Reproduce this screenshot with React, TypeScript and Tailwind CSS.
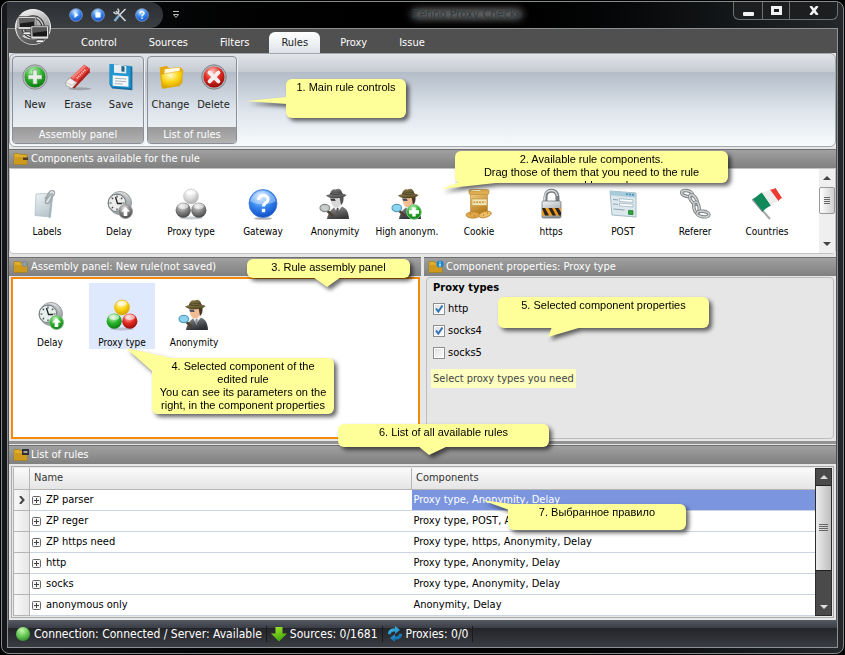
import { useState } from "react";
import type { ReactNode } from "react";
import clsx from "clsx";

const tabs = ["Control", "Sources", "Filters", "Rules", "Proxy", "Issue"];

const initialRules = [
  { name: "ZP parser", components: "Proxy type, Anonymity, Delay" },
  { name: "ZP reger", components: "Proxy type, POST, Anonymity, Delay" },
  { name: "ZP https need", components: "Proxy type, https, Anonymity, Delay" },
  { name: "http", components: "Proxy type, Anonymity, Delay" },
  { name: "socks", components: "Proxy type, Anonymity, Delay" },
  { name: "anonymous only", components: "Anonymity, Delay" },
];

/* Gradients shared by all the icons */
function IconDefs() {
  const linear: [string, string, string][] = [
    ["steel", "#f4f6f7", "#8f9699"],
    ["coat", "#8d9296", "#2d3135"],
    ["coatGray", "#9a9a9a", "#3c3c3c"],
    ["hat", "#9b8c5a", "#4e431f"],
    ["hatGray", "#8e8e8e", "#454545"],
    ["cookie", "#f0cf80", "#b67a1c"],
    ["paper", "#eef4f6", "#b9c8ce"],
    ["arrow", "#a4ea2c", "#45a80a"],
    ["sync", "#4cc3f0", "#0c6fae"],
    ["orb", "#ffffff", "#7a7a7a"],
  ];
  const radial: [string, string, string, string][] = [
    ["green", "#d2f5cf", "#2bb52b", "#08700f"],
    ["red", "#ffc4bb", "#e22a22", "#8c0805"],
    ["yellow", "#fffbd0", "#fbd412", "#cf9800"],
    ["blue", "#cfe8ff", "#3688f0", "#0d46c0"],
    ["silver", "#ffffff", "#dcdcdc", "#a5a5a5"],
    ["dark", "#e4e4e4", "#858585", "#3c3c3c"],
    ["lamp", "#c8f5b0", "#6ccb58", "#2c8a2c"],
  ];
  return (
    <svg className="absolute h-0 w-0" aria-hidden="true">
      <defs>
        {linear.map(([id, a, b]) => (
          <linearGradient key={id} id={id} x1="0" y1="0" x2="0.4" y2="1">
            <stop offset="0" stopColor={a} />
            <stop offset="1" stopColor={b} />
          </linearGradient>
        ))}
        {radial.map(([id, a, b, c]) => (
          <radialGradient key={id} id={id} cx="0.42" cy="0.25" r="0.8">
            <stop offset="0" stopColor={a} />
            <stop offset="0.5" stopColor={b} />
            <stop offset="1" stopColor={c} />
          </radialGradient>
        ))}
      </defs>
    </svg>
  );
}

function Svg({ size = "md", children }: { size?: "sm" | "md"; children: ReactNode }) {
  return (
    <svg viewBox="0 0 32 32" aria-hidden="true" className={clsx("block shrink-0", size === "sm" ? "h-7 w-7" : "h-8 w-8")}>
      {children}
    </svg>
  );
}

/* Ribbon icons */
const NewIcon = () => (
  <Svg size="sm">
    <circle cx="16" cy="16" r="14" fill="#b4b8bb" stroke="#85898c" />
    <circle cx="16" cy="16" r="12" fill="url(#green)" />
    <path d="M13.500 8h5v5.500h5.500v5h-5.500v5.500h-5v-5.500H8v-5h5.500z" fill="#e9eee9" stroke="#3c8d3c" strokeWidth=".6" />
  </Svg>
);

const EraseIcon = () => (
  <Svg size="sm">
    <ellipse cx="18" cy="29.500" rx="13" ry="1.700" fill="#8b8f96" opacity=".7" />
    <path d="M23 2l6.500 4.500v4L12 29l-6-2-4-4z" fill="#b0201d" />
    <path d="M23 2l6.500 4.500L11.500 25 4 20z" fill="#e2403a" />
    <path d="M7 17l7.500 5.500L9 29 2 25.500v-4z" fill="#f3f0ee" stroke="#979393" strokeWidth=".8" />
    <path d="M2 22l7 3.500 6-4" fill="none" stroke="#bdb9b7" />
    <path d="M14.500 17.500L25 7" stroke="#f6c9c4" strokeWidth="2" strokeDasharray="1.500 1" />
    <path d="M23 2l2.500 1.700L10.500 18.200 8 16z" fill="#f59a8f" opacity=".7" />
  </Svg>
);

const SaveIcon = () => (
  <Svg size="sm">
    <path d="M3 1l26 3v27L6 29l-3-4z" fill="#176fa6" />
    <path d="M3 1l24 2.500v25L6 27l-3-3z" fill="#2196cf" />
    <path d="M8 1.500l14 1.500v9l-14-1z" fill="#e7edf1" />
    <path d="M16.500 3.500l3.500.4v6l-3.500-.3z" fill="#24627e" />
    <path d="M6.500 14l18 1.200v12L6.500 26z" fill="#f5f7f8" />
    <path d="M9 17.500l13 .8M9 20.500l13 .8M9 23.500l9 .6" stroke="#9aa8b0" />
  </Svg>
);

const ChangeIcon = () => (
  <Svg size="sm">
    <path d="M3 5l8-2 3 3 12-1.500 3 2v17L7 29l-2-2z" fill="#e3a90c" />
    <path d="M9 7l17-2v6L8 14z" fill="#fffbe0" />
    <path d="M4.500 13L30 8.500 26 26 6.500 29z" fill="url(#yellow)" stroke="#dda50b" strokeWidth=".6" />
  </Svg>
);

const DeleteIcon = () => (
  <Svg size="sm">
    <circle cx="16" cy="16" r="14" fill="#adb0b3" stroke="#7f8286" />
    <circle cx="16" cy="16" r="12" fill="url(#red)" />
    <path d="M11 11l10 10M21 11L11 21" stroke="#f4eeee" strokeWidth="4.600" strokeLinecap="round" />
  </Svg>
);

/* Component icons */
const LabelsIcon = () => (
  <Svg>
    <path d="M5 6l17-1-2.500 24L4 27.500z" fill="url(#paper)" stroke="#b3c0c6" strokeWidth=".8" />
    <path d="M20 5l2-.2L19.500 30l-2-.4z" fill="#a7b6bd" />
    <path d="M14 11l4.500-7c1.500-2.400 6-1.500 4.800 2L18 14.500c-1.500 2.200-4.800.8-3.300-2L19.500 6" fill="none" stroke="#9fa5a8" strokeWidth="1.400" />
  </Svg>
);

function DelayIcon({ gray = false }: { gray?: boolean }) {
  return (
    <Svg>
      <circle cx="17" cy="15" r="11.500" fill="url(#steel)" stroke="#9a9e9f" />
      <circle cx="14.500" cy="15" r="10" fill="#a9afb1" />
      <circle cx="14" cy="15" r="8.800" fill={gray ? "#ececec" : "#e5f0ed"} stroke="#767c7e" />
      <path d="M14 7.500v2M14 20.500v2M6.500 15h2M19.500 15h2M8.700 9.700l1.400 1.400M8.700 20.300l1.400-1.400M19.300 9.700l-1.400 1.400" stroke="#444" strokeWidth="1.200" />
      <path d="M14.500 15.500l-2-6.500M14 15.500h5" stroke="#222" strokeWidth="1.300" />
      <circle cx="22.500" cy="23.500" r="7" fill={gray ? "url(#dark)" : "url(#green)"} stroke={gray ? "#a2a2a2" : "#8bbf90"} />
      <path d="M22.500 19l4.500 4.500h-2.700V28h-3.600v-4.500H18z" fill="#fff" />
    </Svg>
  );
}

function ProxyTypeIcon({ gray = false }: { gray?: boolean }) {
  return (
    <Svg>
      <ellipse cx="16" cy="30" rx="12" ry="1.500" fill="#9298a5" opacity=".5" />
      <circle cx="16" cy="8.500" r="7.500" fill={gray ? "url(#silver)" : "url(#yellow)"} stroke={gray ? "#c4c4c4" : "#dcae14"} strokeWidth=".6" />
      <circle cx="8.200" cy="22.200" r="7.600" fill={gray ? "url(#dark)" : "url(#green)"} />
      <circle cx="23.800" cy="22.200" r="7.600" fill={gray ? "url(#dark)" : "url(#red)"} />
      <ellipse cx="8.200" cy="18.200" rx="5" ry="2.700" fill="#fff" opacity=".55" />
      <ellipse cx="23.800" cy="18.200" rx="5" ry="2.700" fill="#fff" opacity=".55" />
      <ellipse cx="16" cy="4.500" rx="4.800" ry="2.500" fill="#fff" opacity=".6" />
    </Svg>
  );
}

const GatewayIcon = () => (
  <Svg>
    <ellipse cx="16" cy="30.500" rx="9" ry="1.300" fill="#777" opacity=".55" />
    <circle cx="16" cy="15.500" r="14" fill="url(#blue)" stroke="#3f78dc" strokeWidth=".8" />
    <path d="M3 13a13.200 12 0 0 1 26 0c-7 4.500-19 4.500-26 0z" fill="#fff" opacity=".35" />
    <path d="M11.500 12c0-6 9.500-6 9.500-.8 0 3.700-4.500 3.600-4.500 7.300" fill="none" stroke="#fff" strokeWidth="3.200" />
    <rect x="14.800" y="20.800" width="3.400" height="3.400" fill="#fff" />
  </Svg>
);

function SpyIcon({ gray = false, plus = false }: { gray?: boolean; plus?: boolean }) {
  return (
    <Svg>
      <path d="M8 31c1-6 4-10 8-12l5-1c6 1.500 8.500 5 9 13z" fill={gray ? "url(#coatGray)" : "url(#coat)"} />
      <path d="M14.500 18.500l3.500 6 6-7-3-1.500z" fill="#f0f0f0" />
      <path d="M18 19.500l1.800 1-.8 6-2-3z" fill={gray ? "#555" : "#8f8f94"} />
      <path d="M11.500 9c0 6 2 10.500 5.500 10.500s6-3.500 6.500-11.500z" fill={gray ? "#d8d8d8" : "#f2bd93"} />
      <path d="M20.500 9h4c.4 4-.8 6.500-2.500 8z" fill={gray ? "#505050" : "#46372a"} />
      <path d="M11.200 10.500l4.500.3 1 2.200-4.700-.3z" fill={gray ? "#3a3a3a" : "#3f4c66"} />
      <path d="M11 6C12 1.500 14.500.5 16.500 1.600c3-1.800 6-.6 7 4.200z" fill={gray ? "url(#hatGray)" : "url(#hat)"} />
      <path d="M7 7.500c3-2.500 17-3.500 20.500-.5-3 4-17 4.700-20.500.5z" fill={gray ? "url(#hatGray)" : "url(#hat)"} />
      <path d="M11 5.600c4 1 8 1 12.500.1" fill="none" stroke={gray ? "#444" : "#54472a"} strokeWidth="1.200" />
      <path d="M8.500 23l5 4.500" stroke="#4d4030" strokeWidth="2.600" strokeLinecap="round" />
      <ellipse cx="5.800" cy="20" rx="4.800" ry="3.600" fill={gray ? "#c8cccc" : "#8bd5f3"} stroke={gray ? "#888" : "#5b9cba"} strokeWidth="1.200" />
      {plus && (
        <>
          <circle cx="23" cy="24" r="7.300" fill="url(#green)" stroke="#88c88c" />
          <path d="M21.300 19.500h3.400v2.800H28v3.400h-3.300v2.800h-3.400v-2.800H18v-3.400h3.300z" fill="#fff" />
        </>
      )}
    </Svg>
  );
}

const CookieIcon = () => (
  <Svg>
    <path d="M7.500 5h17v20c0 2.500-16 2.500-17 0z" fill="url(#cookie)" stroke="#b98a3a" strokeWidth=".6" />
    <rect x="6" y="1.500" width="20" height="5" rx="1.500" fill="#dfb053" stroke="#b98a3a" strokeWidth=".6" />
    <path d="M8.500 2.500h9" stroke="#fff3ca" />
    <rect x="9" y="11" width="15" height="6.500" fill="#f5e7b4" stroke="#c39a4e" strokeWidth=".7" />
    <path d="M10.500 14.300h12" stroke="#c59a4e" strokeWidth="2" strokeDasharray="1.800 1" />
    <ellipse cx="10" cy="27" rx="7" ry="3.200" fill="#dfa748" stroke="#b07b2b" strokeWidth=".7" />
    <ellipse cx="22" cy="26.500" rx="6.500" ry="3" fill="#edbc63" stroke="#b07b2b" strokeWidth=".7" transform="rotate(-15 22 26.500)" />
    <path d="M7 26h1M11 28h1M20 27h1M24 25h1" stroke="#9a6820" />
  </Svg>
);

const LockIcon = () => (
  <Svg>
    <path d="M10.500 15V9c0-8.500 12-8.500 12 0v6" fill="none" stroke="#777c7f" strokeWidth="4" />
    <path d="M9.800 15V9c0-8.500 12-8.500 12.500-1" fill="none" stroke="#dfe3e5" strokeWidth="1.400" />
    <rect x="7" y="13" width="19" height="17" rx="1.500" fill="url(#steel)" stroke="#65696b" strokeWidth=".7" />
    <rect x="7" y="20" width="19" height="7.500" fill="#ef9b1b" />
    <path d="M7 20h3l4 7.500h-4zM13.500 20h3.500l4 7.500h-3.500zM20 20h3.500l2.500 4.500v3h-2z" fill="#2a2522" />
  </Svg>
);

const PostIcon = () => (
  <Svg>
    <path d="M3 3l26 2v24L5 27z" fill="#dbe8ee" stroke="#a5bac4" />
    <path d="M3 3l26 2v4.500L3.300 7.300z" fill="#a8cbdc" />
    <path d="M19 6.100l8 .7" stroke="#4c93b8" strokeWidth="1.800" strokeDasharray="2 1" />
    <path d="M6 11.500l5 .4M6 16l5 .4M6.500 21l11 1" stroke="#8fa3ad" />
    <path d="M12.500 10.700l13.500 1.100v2.700l-13.500-1.100zM12.500 15.200l13.500 1.100V19l-13.500-1.100z" fill="#fff" stroke="#93a9b4" strokeWidth=".7" />
    <path d="M21.500 22.300l4.500.4v4l-4.500-.4z" fill="#2ca63b" stroke="#18732a" strokeWidth=".7" />
  </Svg>
);

const chainLinks = [
  { cx: 8, cy: 5.5, rx: 5.5, ry: 2.8, angle: 12 },
  { cx: 14.5, cy: 11.5, rx: 2.6, ry: 5.5, angle: -35 },
  { cx: 17.5, cy: 19.5, rx: 2.6, ry: 5.5, angle: -10 },
  { cx: 24, cy: 26, rx: 6, ry: 2.8, angle: 8 },
];

const RefererIcon = () => (
  <Svg>
    {chainLinks.map((l) => (
      <g key={l.cx} fill="none" transform={`rotate(${l.angle} ${l.cx} ${l.cy})`}>
        <ellipse cx={l.cx} cy={l.cy} rx={l.rx} ry={l.ry} stroke="#7c8183" strokeWidth="3.400" />
        <ellipse cx={l.cx} cy={l.cy} rx={l.rx} ry={l.ry} stroke="#cdd1d1" strokeWidth="1.600" />
      </g>
    ))}
  </Svg>
);

const CountriesIcon = () => (
  <Svg>
    <path d="M2 12L18.500 30.500" stroke="#a3a8aa" strokeWidth="2" strokeLinecap="round" />
    <path d="M1.500 11c4-2 6-4.500 9.500-6.500l9 13c-4 2-6.500 3.500-8.500 6.500z" fill="#12895a" />
    <path d="M11 4.500c2.500-1 5.500-1 8-3l8.500 11.500c-3 1.500-5 2.500-7.500 4.500z" fill="#ededed" />
    <path d="M19 1.500c2 0 3.500-.5 5.500-1.500L31 10c-1.500.5-2.500 1.500-3.500 3z" fill="#ec3a30" />
    <path d="M1.500 11l10 13" stroke="#8c9294" />
  </Svg>
);

const available = [
  { label: "Labels", icon: <LabelsIcon /> },
  { label: "Delay", icon: <DelayIcon gray /> },
  { label: "Proxy type", icon: <ProxyTypeIcon gray /> },
  { label: "Gateway", icon: <GatewayIcon /> },
  { label: "Anonymity", icon: <SpyIcon gray /> },
  { label: "High anonym.", icon: <SpyIcon plus /> },
  { label: "Cookie", icon: <CookieIcon /> },
  { label: "https", icon: <LockIcon /> },
  { label: "POST", icon: <PostIcon /> },
  { label: "Referer", icon: <RefererIcon /> },
  { label: "Countries", icon: <CountriesIcon /> },
];

const assembled = [
  { label: "Delay", icon: <DelayIcon /> },
  { label: "Proxy type", icon: <ProxyTypeIcon /> },
  { label: "Anonymity", icon: <SpyIcon /> },
];

function OrbLogo() {
  return (
    <svg viewBox="0 0 36 36" className="block h-9 w-9" aria-hidden="true">
      <circle cx="18" cy="18" r="17.500" fill="url(#orb)" stroke="#efefef" />
      <path d="M1.500 19h33a16.500 16.500 0 0 1-33 0z" fill="#3a3a3a" opacity=".55" />
      <path d="M7 27a14 9 0 0 0 22 0c-5-3-17-3-22 0z" fill="#fff" opacity=".75" />
      <circle cx="18" cy="18" r="10" fill="none" stroke="#3a3a3a" strokeWidth="3.600" />
      <circle cx="18" cy="18" r="10" fill="none" stroke="#c9c9c9" strokeWidth="1.400" />
      <path d="M9 23h6l1.500 2.500h-9z" fill="#efefef" stroke="#333" strokeWidth=".6" />
      <rect x="3" y="7.500" width="18" height="13" fill="#d6d6d6" stroke="#333" strokeWidth=".6" />
      <rect x="4.500" y="9" width="15" height="9" fill="#1c1c1c" />
      <path d="M4.500 9h15v3.500l-15 2z" fill="#5f5f5f" />
      <path d="M22 31h6l1.500 2.500h-9z" fill="#f4f4f4" stroke="#333" strokeWidth=".6" />
      <rect x="16" y="17" width="17.500" height="13" fill="#e2e2e2" stroke="#333" strokeWidth=".6" />
      <rect x="17.500" y="18.500" width="14.500" height="9" fill="#191919" />
      <path d="M17.500 18.500H32V22l-14.500 2z" fill="#555" />
    </svg>
  );
}

function QuickBall({ children }: { children: ReactNode }) {
  return (
    <svg viewBox="0 0 14 14" className="block h-3.5 w-3.5" aria-hidden="true">
      <circle cx="7" cy="7" r="6.300" fill="url(#blue)" stroke="#93aee0" strokeWidth=".7" />
      {children}
    </svg>
  );
}

function FolderIcon({ badge }: { badge?: "gear" | "info" | "screen" }) {
  return (
    <svg viewBox="0 0 16 14" className="block h-3.5 w-4" aria-hidden="true">
      <path d="M1 1.500h5l1.500 1H14v10H1z" fill="#dfae2a" stroke="#9c7716" strokeWidth=".6" />
      <path d="M1.500 5H14v7H1.500z" fill="#cf9a1b" />
      {!badge && <path d="M10 5.500h5v2.500h-5z" fill="#4c4020" />}
      {badge === "gear" && <circle cx="11.500" cy="4" r="2.500" fill="#8fa0ad" stroke="#6a7883" strokeDasharray="1.200 .8" />}
      {badge === "info" && (
        <>
          <circle cx="12" cy="4" r="3.600" fill="#1d86c8" />
          <path d="M12 3.500v3M12 1.500v1" stroke="#fff" strokeWidth="1.200" />
        </>
      )}
      {badge === "screen" && (
        <>
          <rect x="9" y="1" width="7" height="6" fill="#2c2f33" />
          <rect x="10.500" y="3" width="4" height="2" fill="#a3a3a3" />
        </>
      )}
    </svg>
  );
}

function PanelHeader({ title, badge }: { title: string; badge?: "gear" | "info" | "screen" }) {
  return (
    <div className="flex h-[19px] items-center gap-0.5 border-t border-[#6f6f6f] bg-linear-to-b from-[#a0a0a0] to-[#808080] pl-1 text-white">
      <FolderIcon badge={badge} />
      <h2>{title}</h2>
    </div>
  );
}

function ComponentTile({ label, icon, selected, onClick }: { label: string; icon: ReactNode; selected?: boolean; onClick?: () => void }) {
  return (
    <button
      type="button"
      onClick={onClick}
      className={clsx("flex h-[66px] w-[66px] shrink-0 flex-col items-center justify-end gap-1.5", selected && "bg-[#dfe9fd]")}
    >
      {icon}
      <span className="text-[10px] leading-3 whitespace-nowrap">{label}</span>
    </button>
  );
}

function RibbonGroup({ title, className, children }: { title: string; className: string; children: ReactNode }) {
  return (
    <section className={clsx("flex flex-col overflow-hidden rounded-sm border border-[#8b9098] shadow-[1px_1px_0_#eef1f4]", className)}>
      <div className="flex h-[70px] justify-center">{children}</div>
      <h2 className="h-4 bg-linear-to-b from-[#989898] to-[#b2b2b2] text-center leading-4 text-white">{title}</h2>
    </section>
  );
}

function RibbonButton({ label, icon }: { label: string; icon: ReactNode }) {
  return (
    <button type="button" className="flex w-[43px] flex-col items-center gap-1.5 pt-1.5 text-[#222]">
      {icon}
      <span className="leading-4">{label}</span>
    </button>
  );
}

function Callout({ place, tail, lines }: { place: string; tail: string; lines: string[] }) {
  return (
    <aside className={clsx("pointer-events-none absolute z-20 drop-shadow-[3px_3px_2px_rgba(0,0,0,0.6)]", place)}>
      <svg className="absolute top-0 left-0 h-px w-px overflow-visible" aria-hidden="true">
        <path d={tail} fill="#ffff99" />
      </svg>
      <div className="h-full overflow-hidden rounded-md bg-[#ffff99] pt-0.5 text-center font-['Liberation_Sans',sans-serif] text-[11px] leading-[13px] whitespace-nowrap text-black">
        {lines.map((line) => (
          <p key={line}>{line}</p>
        ))}
      </div>
    </aside>
  );
}

function Arrow({ down, light }: { down?: boolean; light?: boolean }) {
  return (
    <svg viewBox="0 0 8 4" className="mx-auto block h-1 w-2" aria-hidden="true">
      <path d={down ? "M0 0h8L4 4z" : "M0 4h8L4 0z"} fill={light ? "#dcdcdc" : "#444"} />
    </svg>
  );
}

export default function App() {
  const [tab, setTab] = useState("Rules");
  const [selected, setSelected] = useState("Proxy type");
  const [activeRule, setActiveRule] = useState(0);
  const [types, setTypes] = useState([
    { id: "http", on: true },
    { id: "socks4", on: true },
    { id: "socks5", on: false },
  ]);

  const toggleType = (id: string) => setTypes(types.map((t) => (t.id === id ? { ...t, on: !t.on } : t)));

  return (
    <div className="relative flex min-h-screen flex-col bg-black p-px font-['DejaVu_Sans_Condensed','DejaVu_Sans',sans-serif] text-[11px] leading-4 text-black">
      <IconDefs />
      <div className="flex flex-1 flex-col rounded-lg border border-[#858a8a] bg-linear-to-r from-[#15171a] via-black to-[#24282b] px-[5px] pb-[5px]">
        <header className="relative flex h-[26px] items-start justify-between">
          <div className="flex h-[26px] items-center">
            <div className="flex h-[26px] items-center gap-2 rounded-r-full bg-linear-to-b from-[#2b2f33] to-[#3b3f42] pr-3.5 pl-[62px]">
              <button type="button" aria-label="Start">
                <QuickBall>
                  <path d="M5.500 4l4 3-4 3z" fill="#fff" />
                </QuickBall>
              </button>
              <button type="button" aria-label="Stop">
                <QuickBall>
                  <rect x="4.500" y="4.500" width="5" height="5" fill="#fff" />
                </QuickBall>
              </button>
              <button type="button" aria-label="Settings">
                <svg viewBox="0 0 14 14" className="block h-3.5 w-3.5" aria-hidden="true">
                  <path d="M12.500 1L6 7.500" stroke="#e6e6e6" strokeWidth="1.300" />
                  <path d="M6 7.500L1.500 13" stroke="#7fb0d8" strokeWidth="2.400" />
                  <path d="M3 3l9.500 10" stroke="#c8cfd4" strokeWidth="1.800" />
                  <path d="M4.500.8a2.600 2.600 0 1 1-3.800 3" fill="none" stroke="#c8cfd4" strokeWidth="1.600" />
                </svg>
              </button>
              <button type="button" aria-label="Help">
                <QuickBall>
                  <path d="M5 5.500c0-2.500 4-2.500 4-.2C9 6.800 7 6.800 7 8.500M7 9.500v1.500" fill="none" stroke="#fff" strokeWidth="1.400" />
                </QuickBall>
              </button>
            </div>
            <button type="button" aria-label="Customize toolbar" className="ml-1.5 p-1">
              <svg viewBox="0 0 6 8" className="block h-2 w-1.5" aria-hidden="true">
                <path d="M0 .5h6M.5 3.500h5L3 6.500z" fill="none" stroke="#bbb" />
              </svg>
            </button>
          </div>
          <div className="absolute top-1 left-[405px]">
            <div className="absolute inset-x-0 inset-y-1 rounded-full bg-[#8a8a8a] blur-[4px]" />
            <h1 className="relative text-[12px] text-[#2f3b40]">Zenno Proxy Checke</h1>
          </div>
          <div className="flex h-[18px] divide-x divide-[#6d7173] rounded-b-md border border-t-0 border-[#6d7173] bg-[#1c1e20]">
            <button type="button" aria-label="Minimize" className="flex w-[29px] items-center justify-center pt-1.5">
              <span className="h-1 w-[11px] rounded-[1px] bg-[#f2f2f2]" />
            </button>
            <button type="button" aria-label="Maximize" className="flex w-[27px] items-center justify-center">
              <span className="h-[9px] w-[11px] border-[3px] border-[#f2f2f2]" />
            </button>
            <button type="button" aria-label="Close" className="flex w-[47px] items-center justify-center">
              <svg viewBox="0 0 10 9" className="block h-[9px] w-2.5" aria-hidden="true">
                <path d="M1.500 0L8.500 9M8.500 0L1.500 9" stroke="#f2f2f2" strokeWidth="2.600" />
              </svg>
            </button>
          </div>
          <button type="button" aria-label="Application menu" className="absolute top-[7px] left-2 z-10 rounded-full">
            <OrbLogo />
          </button>
        </header>

        <div className="flex flex-1 flex-col border border-[#8c9090] bg-[#505050] px-px">
          <nav className="flex h-6 items-end gap-2 pl-[60px]">
            {tabs.map((t) => (
              <button
                key={t}
                type="button"
                onClick={() => setTab(t)}
                className={clsx(
                  "h-[21px] rounded-t-md px-3",
                  t === tab ? "bg-linear-to-b from-white to-[#dfe3e8] text-[#222]" : "text-white"
                )}
              >
                {t}
              </button>
            ))}
          </nav>

          <div className="flex flex-1 flex-col bg-[#e6e6e6]">
            <div className="flex h-[94px] gap-[3px] rounded-md border border-[#a3a8ae] bg-[linear-gradient(#e2e5e9,#c5cad3_20%,#b3bcc8_20%,#dce3ea_60%,#f8fbfd)] p-0.5">
              <RibbonGroup title="Assembly panel" className="w-[132px]">
                <RibbonButton label="New" icon={<NewIcon />} />
                <RibbonButton label="Erase" icon={<EraseIcon />} />
                <RibbonButton label="Save" icon={<SaveIcon />} />
              </RibbonGroup>
              <RibbonGroup title="List of rules" className="w-[90px]">
                <RibbonButton label="Change" icon={<ChangeIcon />} />
                <RibbonButton label="Delete" icon={<DeleteIcon />} />
              </RibbonGroup>
            </div>

            <section className="mt-0.5">
              <PanelHeader title="Components available for the rule" />
              <div className="flex h-[86px] justify-between rounded-b-sm border border-[#c2c2c2] bg-white">
                <div className="flex gap-1.5 overflow-hidden pt-[3px] pl-1">
                  {available.map((c) => (
                    <ComponentTile key={c.label} label={c.label} icon={c.icon} />
                  ))}
                </div>
                <div className="flex w-4 flex-col bg-[#efefef]">
                  <button type="button" aria-label="Scroll up" className="h-[18px]">
                    <Arrow />
                  </button>
                  <div className="flex h-[27px] flex-col items-center justify-center gap-px rounded-[2px] border border-[#999] bg-linear-to-r from-white to-[#cfcfcf]">
                    <span className="h-px w-1.5 bg-[#666]" />
                    <span className="h-px w-1.5 bg-[#666]" />
                    <span className="h-px w-1.5 bg-[#666]" />
                    <span className="h-px w-1.5 bg-[#666]" />
                  </div>
                  <button type="button" aria-label="Scroll down" className="mt-auto h-[18px]">
                    <Arrow down />
                  </button>
                </div>
              </div>
            </section>

            <div className="mt-[3px] flex flex-1 gap-[3px]">
              <section className="flex flex-1 flex-col">
                <PanelHeader title="Assembly panel: New rule(not saved)" badge="gear" />
                <div className="mt-px mr-px ml-0.5 flex flex-1 gap-1.5 border-2 border-[#f58a0a] bg-white pt-1 pl-1">
                  {assembled.map((c) => (
                    <ComponentTile
                      key={c.label}
                      label={c.label}
                      icon={c.icon}
                      selected={c.label === selected}
                      onClick={() => setSelected(c.label)}
                    />
                  ))}
                </div>
              </section>
              <section className="flex flex-1 flex-col">
                <PanelHeader title="Component properties: Proxy type" badge="info" />
                <div className="mx-0.5 mt-px flex flex-1 flex-col items-start rounded-sm border border-[#bdbdbd] px-1 pt-0.5">
                  <h3 className="pl-0.5 font-bold">Proxy types</h3>
                  <div className="mt-0.5 flex flex-col pl-0.5">
                    {types.map((t) => (
                      <label key={t.id} className="flex h-[22px] items-center gap-[3px]">
                        <span className="relative h-3 w-3">
                          <input
                            type="checkbox"
                            checked={t.on}
                            onChange={() => toggleType(t.id)}
                            className="peer block h-3 w-3 appearance-none border border-[#8e8f8f] bg-linear-to-br from-[#dcdcdc] to-white outline outline-offset-[-2px] outline-white"
                          />
                          <svg viewBox="0 0 12 12" className="pointer-events-none absolute inset-0 hidden h-3 w-3 peer-checked:block" aria-hidden="true">
                            <path d="M3 5.500l2.300 3L9.500 2.500" fill="none" stroke="#3173b8" strokeWidth="2" />
                          </svg>
                        </span>
                        {t.id}
                      </label>
                    ))}
                  </div>
                  <p className="mt-[5px] bg-[#ffffc0] px-0.5 leading-[19px] text-[#444]">Select proxy types you need</p>
                </div>
              </section>
            </div>

            <section className="mt-0.5 border-t-[3px] border-[#929292] pt-px">
              <PanelHeader title="List of rules" badge="screen" />
              <div className="m-0.5 flex border border-[#aaa] p-px">
                <table className="flex-1 table-fixed border-collapse bg-white text-left">
                  <colgroup>
                    <col className="w-4" />
                    <col className="w-[382px]" />
                    <col />
                  </colgroup>
                  <thead>
                    <tr className="h-[22px] bg-linear-to-b from-[#fafafa] to-[#e4e4e4] text-[#333]">
                      <th className="border border-t-0 border-[#b5b5b5]" aria-label="Current" />
                      <th className="border border-t-0 border-[#b5b5b5] px-1 font-normal">Name</th>
                      <th className="border border-t-0 border-r-0 border-[#b5b5b5] px-1 font-normal">Components</th>
                    </tr>
                  </thead>
                  <tbody>
                    {initialRules.map((rule, i) => (
                      <tr key={rule.name} className="h-[21px]" onClick={() => setActiveRule(i)}>
                        <td className="border border-[#b5b5b5] bg-linear-to-r from-[#f8f8f8] to-[#e6e6e6]">
                          {i === activeRule && (
                            <svg viewBox="0 0 6 8" className="mx-auto block h-2 w-1.5" aria-hidden="true">
                              <path d="M1 0l3.500 4L1 8" fill="none" stroke="#444" strokeWidth="2" />
                            </svg>
                          )}
                        </td>
                        <td className="border-b border-[#ccd4e4] px-0.5">
                          <div className="flex items-center gap-[5px]">
                            <button type="button" aria-label={`Expand ${rule.name}`}>
                              <svg viewBox="0 0 9 9" className="block h-[9px] w-[9px]" aria-hidden="true">
                                <rect x=".5" y=".5" width="8" height="8" rx="1" fill="#f4f4f4" stroke="#666" />
                                <path d="M2 4.500h5M4.500 2v5" stroke="#444" />
                              </svg>
                            </button>
                            <span>{rule.name}</span>
                          </div>
                        </td>
                        <td className={clsx("border-b border-[#ccd4e4] px-0.5", i === activeRule && "bg-[#7b95de] text-white")}>
                          {rule.components}
                        </td>
                      </tr>
                    ))}
                  </tbody>
                </table>
                <div className="flex w-[17px] flex-col border border-[#2c2c2c] bg-[#4a4a4a]">
                  <button type="button" aria-label="Scroll rules up" className="h-4">
                    <Arrow light />
                  </button>
                  <div className="flex h-[86px] flex-col items-center justify-center gap-px border-y border-[#222] bg-linear-to-r from-[#ececec] to-[#bdbdbd]">
                    <span className="h-px w-[9px] bg-[#666]" />
                    <span className="h-px w-[9px] bg-[#666]" />
                    <span className="h-px w-[9px] bg-[#666]" />
                    <span className="h-px w-[9px] bg-[#666]" />
                  </div>
                  <button type="button" aria-label="Scroll rules down" className="mt-auto h-4">
                    <Arrow down light />
                  </button>
                </div>
              </div>
            </section>
          </div>

          <footer className="-mx-px flex h-[27px] items-center bg-[linear-gradient(#555963,#3c3f47_28%,#242529_30%,#3a3c43)] pl-[7px] text-[12px] text-white">
            <div className="flex items-center gap-[3px] border-r border-[#1a1b1e] pr-1">
              <svg viewBox="0 0 16 16" className="block h-4 w-4" aria-hidden="true">
                <circle cx="8" cy="8" r="7" fill="url(#lamp)" />
              </svg>
              Connection: Connected / Server: Available
            </div>
            <div className="flex items-center gap-[3px] border-r border-[#1a1b1e] px-1">
              <svg viewBox="0 0 16 16" className="block h-4 w-4" aria-hidden="true">
                <path d="M4.500 1h7v6.500H16L8 15.500 0 7.500h4.500z" fill="url(#arrow)" />
              </svg>
              Sources: 0/1681
            </div>
            <div className="flex items-center gap-[3px] border-r border-[#1a1b1e] px-1">
              <svg viewBox="0 0 16 16" className="block h-4 w-4" aria-hidden="true">
                <path d="M1 8C1 4 4 2 8 2.500V0l5 4-5 4V5.500C5.500 5.200 4 6 3.500 8.500zM15 8c0 4-3 6-7 5.500V16l-5-4 5-4v2.500c2.500.3 4-.5 4.500-3z" fill="url(#sync)" />
              </svg>
              Proxies: 0/0
            </div>
          </footer>
        </div>
      </div>

      <Callout place="top-[79px] left-[286px] h-[39px] w-[120px]" tail="M1 18L-40 22L1 25z" lines={["1. Main rule controls"]} />
      <Callout
        place="top-[151px] left-[455px] h-8 w-[273px]"
        tail="M7 30L-14 38L60 30z"
        lines={["2. Available rule components.", "Drag those of them that you need to the rule", "assembly panel."]}
      />
      <Callout place="top-[259px] left-[247px] h-[19px] w-[163px]" tail="M66 18L80 28L94 18z" lines={["3. Rule assembly panel"]} />
      <Callout
        place="top-[358px] left-[152px] h-[56px] w-[182px]"
        tail="M1 14L-26 -10L24 1z"
        lines={["4. Selected component of the", "edited rule", "You can see its parameters on the", "right, in the component properties"]}
      />
      <Callout place="top-[297px] left-[498px] h-[31px] w-[211px]" tail="M54 30L50 40L84 30z" lines={["5. Selected component properties"]} />
      <Callout place="top-[424px] left-[338px] h-[23px] w-[211px]" tail="M80 22L91 31L110 22z" lines={["6. List of all available rules"]} />
      <Callout place="top-[504px] left-[508px] h-[26px] w-[178px]" tail="M1 6L-26 -4L12 1z" lines={["7. Выбранное правило"]} />
    </div>
  );
}
